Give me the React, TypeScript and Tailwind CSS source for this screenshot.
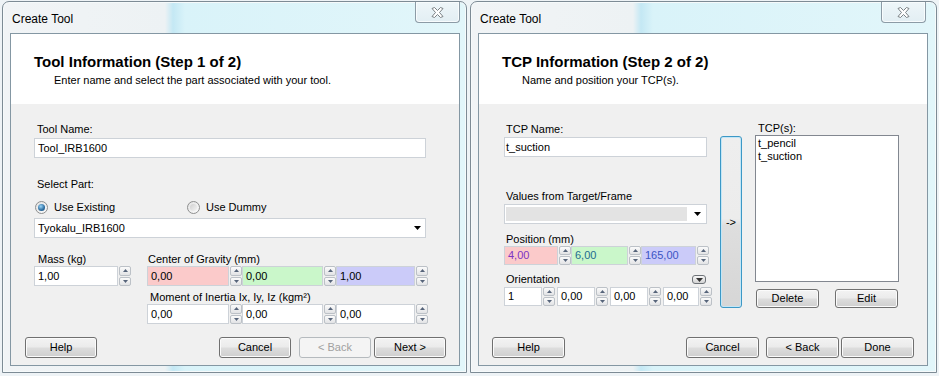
import React from "react";

type Kids = { children?: React.ReactNode };

function Tri({ up }: { up?: boolean }) {
  return (
    <svg width="5" height="3" viewBox="0 0 5 3">
      <path d={up ? "M0 3L2.5 0L5 3Z" : "M0 0L5 0L2.5 3Z"} fill="#56647a" />
    </svg>
  );
}

function SpinButtons({ h = "h-[20px]" }: { h?: string }) {
  return (
    <div className={`ml-[1px] flex w-[12px] flex-col gap-[1px] ${h}`}>
      <div className="flex flex-1 items-center justify-center rounded-[2px] border border-[#bcc1c7] bg-[linear-gradient(#fbfbfb,#e2e3e5)]">
        <Tri up />
      </div>
      <div className="flex flex-1 items-center justify-center rounded-[2px] border border-[#bcc1c7] bg-[linear-gradient(#fbfbfb,#e2e3e5)]">
        <Tri />
      </div>
    </div>
  );
}

function Spin({
  value,
  box,
  h = "h-[20px]",
}: {
  value: string;
  box: string;
  h?: string;
}) {
  return (
    <div className={`flex ${h}`}>
      <div className={`flex items-center border border-[#cdd2d8] pl-[3px] ${box}`}>{value}</div>
      <SpinButtons h={h} />
    </div>
  );
}

function Btn({ children, className = "", disabled = false }: Kids & { className?: string; disabled?: boolean }) {
  return (
    <div
      className={`flex items-center justify-center rounded-[3px] border ${
        disabled
          ? "border-[#b5babe] bg-[#f4f4f4] text-[#a0a0a0]"
          : "border-[#707070] bg-[linear-gradient(#f3f3f3_0%,#ebebeb_48%,#dddddd_52%,#cfcfcf_100%)] text-black shadow-[inset_0_0_0_1px_#fbfbfb]"
      } ${className}`}
    >
      {children}
    </div>
  );
}

function Radio({ on }: { on?: boolean }) {
  return (
    <div className="flex h-[13px] w-[13px] items-center justify-center rounded-full border border-[#8e8f8f] bg-[linear-gradient(135deg,#e3e3e3,#fbfbfb)]">
      {on ? (
        <div className="h-[7px] w-[7px] rounded-full bg-[radial-gradient(circle_at_40%_35%,#9ad6f9,#2c6b9e_60%,#1b4d78)]" />
      ) : (
        <div className="h-[7px] w-[7px] rounded-full bg-[linear-gradient(135deg,#d0d0d0,#f4f4f4)]" />
      )}
    </div>
  );
}

function DownArrow() {
  return (
    <svg width="7" height="4" viewBox="0 0 7 4">
      <path d="M0 0H7L3.5 4Z" fill="#000" />
    </svg>
  );
}

function CloseBtn({ className }: { className: string }) {
  return (
    <div
      className={`flex h-[21px] w-[45px] items-center justify-center rounded-b-[4px] border border-t-0 border-[#8c9ba6] bg-[linear-gradient(#eef6f9,#e2eef3)] shadow-[inset_0_0_0_1px_#f8fcfd] ${className}`}
    >
      <svg width="13" height="11" viewBox="0 0 13 11">
        <path
          d="M1 1.5L3.5 0.5L6.5 3.5L9.5 0.5L12 1.5L8.5 5.5L12 9.5L9.5 10.5L6.5 7.5L3.5 10.5L1 9.5L4.5 5.5Z"
          fill="#ffffff"
          stroke="#6d7478"
          strokeWidth="0.9"
          strokeLinejoin="round"
        />
      </svg>
    </div>
  );
}

function Window({
  heading,
  sub,
  width,
  closeMr,
  children,
}: Kids & { heading: string; sub: string; width: string; closeMr: string }) {
  return (
    <div
      className={`mt-[1px] flex h-[372px] flex-col rounded-t-[7px] border border-[#7d8b95] bg-[linear-gradient(90deg,#f1f4f6_0px,#edf2f4_162px,#c4e8f4_170px,#d9f3f9_182px,#e2f6fa_100%)] shadow-[inset_0_0_0_1px_#f6fafb] ${width}`}
    >
      <div className="flex h-[31px] items-start justify-between">
        <span className="pl-[9px] pt-[9px] text-[12px] leading-[16px] text-black">Create Tool</span>
        <CloseBtn className={closeMr} />
      </div>
      <div className="ml-[7px] flex h-[333px] w-[450px] flex-col border border-[#8497a3] bg-white">
        <div className="h-[70px] pl-[23px]">
          <div className="mt-[19px] text-[15px] font-bold leading-[18px]">{heading}</div>
          <div className="ml-[20px] mt-[3px] text-[11px] leading-[13px]">{sub}</div>
        </div>
        <div className="flex h-[261px] flex-col bg-[#f0f0f0]">{children}</div>
      </div>
    </div>
  );
}

function ToolInfo() {
  return (
    <Window
      heading="Tool Information (Step 1 of 2)"
      sub="Enter name and select the part associated with your tool."
      width="w-[465px]"
      closeMr="mr-[6px]"
    >
      <div className="ml-[26px] mt-[19px] leading-[13px]">Tool Name:</div>
      <div className="ml-[23px] mt-[2px] flex h-[20px] w-[392px] items-center border border-[#cdd2d8] bg-white pl-[3px]">
        Tool_IRB1600
      </div>
      <div className="ml-[26px] mt-[20px] leading-[13px]">Select Part:</div>
      <div className="ml-[24px] mt-[9px] flex h-[14px] items-center">
        <Radio on />
        <span className="ml-[6px] w-[133px]">Use Existing</span>
        <Radio />
        <span className="ml-[6px]">Use Dummy</span>
      </div>
      <div className="ml-[23px] mt-[4px] flex h-[20px] w-[392px] items-center justify-between border border-[#cdd2d8] bg-white pl-[3px] pr-[4px]">
        <span>Tyokalu_IRB1600</span>
        <DownArrow />
      </div>
      <div className="ml-[23px] mt-[15px] flex">
        <div className="flex w-[113px] flex-col">
          <div className="pl-[4px] leading-[13px]">Mass (kg)</div>
          <Spin value="1,00" box="w-[84px] bg-white" />
        </div>
        <div className="flex flex-col">
          <div className="pl-[1px] leading-[13px]">Center of Gravity (mm)</div>
          <div className="flex">
            <Spin value="0,00" box="w-[82px] bg-[#fbcaca]" />
            <Spin value="0,00" box="w-[81px] bg-[#caf7ca]" />
            <Spin value="1,00" box="w-[79px] bg-[#cbcbf9]" />
          </div>
          <div className="mt-[5px] pl-[3px] leading-[13px]">Moment of Inertia Ix, Iy, Iz (kgm²)</div>
          <div className="flex">
            <Spin value="0,00" box="w-[82px] bg-white" />
            <Spin value="0,00" box="w-[81px] bg-white" />
            <Spin value="0,00" box="w-[79px] bg-white" />
          </div>
        </div>
      </div>
      <div className="mb-[7px] mt-auto flex h-[21px]">
        <Btn className="ml-[14px] w-[72px]">Help</Btn>
        <div className="flex-1" />
        <Btn className="w-[72px]">Cancel</Btn>
        <Btn disabled className="ml-[8px] w-[72px]">
          &lt; Back
        </Btn>
        <Btn className="ml-[3px] mr-[13px] w-[72px]">Next &gt;</Btn>
      </div>
    </Window>
  );
}

function TcpInfo() {
  return (
    <Window
      heading="TCP Information (Step 2 of 2)"
      sub="Name and position your TCP(s)."
      width="w-[467px]"
      closeMr="mr-[10px]"
    >
      <div className="flex">
        <div className="ml-[25px] flex w-[203px] flex-col">
          <div className="ml-[2px] mt-[19px] leading-[13px]">TCP Name:</div>
          <div className="mt-[1px] flex h-[20px] items-center border border-[#cdd2d8] bg-white pl-[1px]">t_suction</div>
          <div className="ml-[2px] mt-[33px] leading-[13px]">Values from Target/Frame</div>
          <div className="mt-[1px] flex h-[20px] items-center border border-[#cdd2d8] bg-white pl-[1px] pr-[5px]">
            <div className="h-[14px] w-[181px] bg-[#e3e3e3]" />
            <div className="flex-1" />
            <DownArrow />
          </div>
          <div className="ml-[2px] mt-[9px] leading-[13px]">Position (mm)</div>
          <div className="flex">
            <Spin value="4,00" box="w-[54px] bg-[#fbcaca] text-[#7d34c4]" h="h-[19px]" />
            <Spin value="6,00" box="w-[57px] bg-[#caf7ca] text-[#1f6b90]" h="h-[19px]" />
            <Spin value="165,00" box="w-[55px] bg-[#cbcbf9] text-[#3a55c4]" h="h-[19px]" />
          </div>
          <div className="mt-[8px] flex items-center justify-between leading-[13px]">
            <span className="ml-[2px]">Orientation</span>
            <div className="mr-[1px] flex h-[9px] w-[14px] items-center justify-center rounded-[3px] border border-[#6e7378] bg-[linear-gradient(#f6f6f6,#d4d4d4)]">
              <svg width="7" height="4" viewBox="0 0 7 4">
                <path d="M0 0H7L3.5 4Z" fill="#333" />
              </svg>
            </div>
          </div>
          <div className="mt-[1px] flex gap-[2px]">
            <Spin value="1" box="w-[38px] bg-white" h="h-[19px]" />
            <Spin value="0,00" box="w-[38px] bg-white" h="h-[19px]" />
            <Spin value="0,00" box="w-[38px] bg-white" h="h-[19px]" />
            <Spin value="0,00" box="w-[36px] bg-white" h="h-[19px]" />
          </div>
        </div>
        <div className="ml-[13px] mt-[32px] flex h-[172px] w-[22px] items-center justify-center rounded-[3px] border border-[#3c98c6] bg-[linear-gradient(#eeeeee_0%,#ececec_48%,#dedede_52%,#d6d6d6_100%)] shadow-[inset_0_0_0_1px_#c3e6f6]">
          -&gt;
        </div>
        <div className="ml-[13px] flex w-[144px] flex-col">
          <div className="ml-[3px] mt-[18px] leading-[13px]">TCP(s):</div>
          <div className="flex h-[147px] flex-col border border-[#828790] bg-white pl-[2px] pt-[1px] leading-[13px]">
            <span>t_pencil</span>
            <span>t_suction</span>
          </div>
          <div className="mt-[7px] flex h-[19px]">
            <Btn className="ml-[1px] w-[63px]">Delete</Btn>
            <Btn className="ml-[16px] w-[63px]">Edit</Btn>
          </div>
        </div>
      </div>
      <div className="mb-[7px] mt-auto flex h-[21px]">
        <Btn className="ml-[13px] w-[73px]">Help</Btn>
        <div className="flex-1" />
        <Btn className="w-[73px]">Cancel</Btn>
        <Btn className="ml-[7px] w-[73px]">&lt; Back</Btn>
        <Btn className="ml-[2px] mr-[13px] w-[73px]">Done</Btn>
      </div>
    </Window>
  );
}

export default function App() {
  return (
    <div className="flex h-[376px] w-[939px] gap-[3px] overflow-hidden bg-[#eef3f6] pl-[2px] font-['Liberation_Sans',Arial,sans-serif] text-[11px] text-black">
      <ToolInfo />
      <TcpInfo />
    </div>
  );
}
